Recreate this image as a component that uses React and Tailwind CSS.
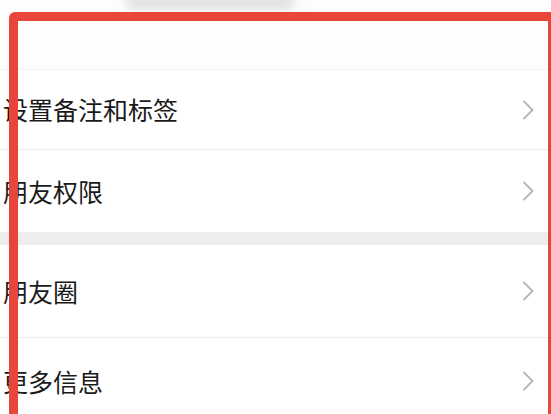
import React from 'react'

const Chevron = () => (
  <svg width="14" height="22" viewBox="0 0 14 22" fill="none" className="shrink-0">
    <path d="M3 2.5 L11.5 11 L3 19.5" stroke="#b5b5b5" strokeWidth="1.8" strokeLinecap="round" strokeLinejoin="round" />
  </svg>
)

function Row({ label, h, border = true }) {
  return (
    <div className={`flex items-center justify-between pl-[3px] pr-[16px] bg-white ${h} ${border ? 'border-b border-[#ececec]' : ''}`}>
      <span className="text-[25px] leading-none text-[#1a1a1a]">{label}</span>
      <Chevron />
    </div>
  )
}

export default function App() {
  return (
    <div
      className="relative w-[551px] h-[414px] overflow-hidden bg-white"
      style={{ fontFamily: '"Noto Sans CJK SC", "Noto Sans", sans-serif' }}
    >
      {/* top blank area */}
      <div className="relative h-[70px] bg-[#fdfdfd] border-b border-[#f2f2f2]">
        <div className="absolute left-[125px] top-[-6px] w-[170px] h-[16px] rounded-full bg-[#e2e2e2] blur-[5px]" />
      </div>

      <Row label="设置备注和标签" h="h-[80px]" />
      <Row label="朋友权限" h="h-[82px]" border={false} />
      <div className="h-[13px] bg-[#ededed]" />
      <Row label="朋友圈" h="h-[93px]" />
      <Row label="更多信息" h="h-[86px]" border={false} />

      {/* red annotation box */}
      <div className="absolute left-[9px] top-[12px] w-[542px] h-[440px] border-[9px] border-r-[3px] border-[#e8463b] rounded-tl-[6px] pointer-events-none" />
    </div>
  )
}
